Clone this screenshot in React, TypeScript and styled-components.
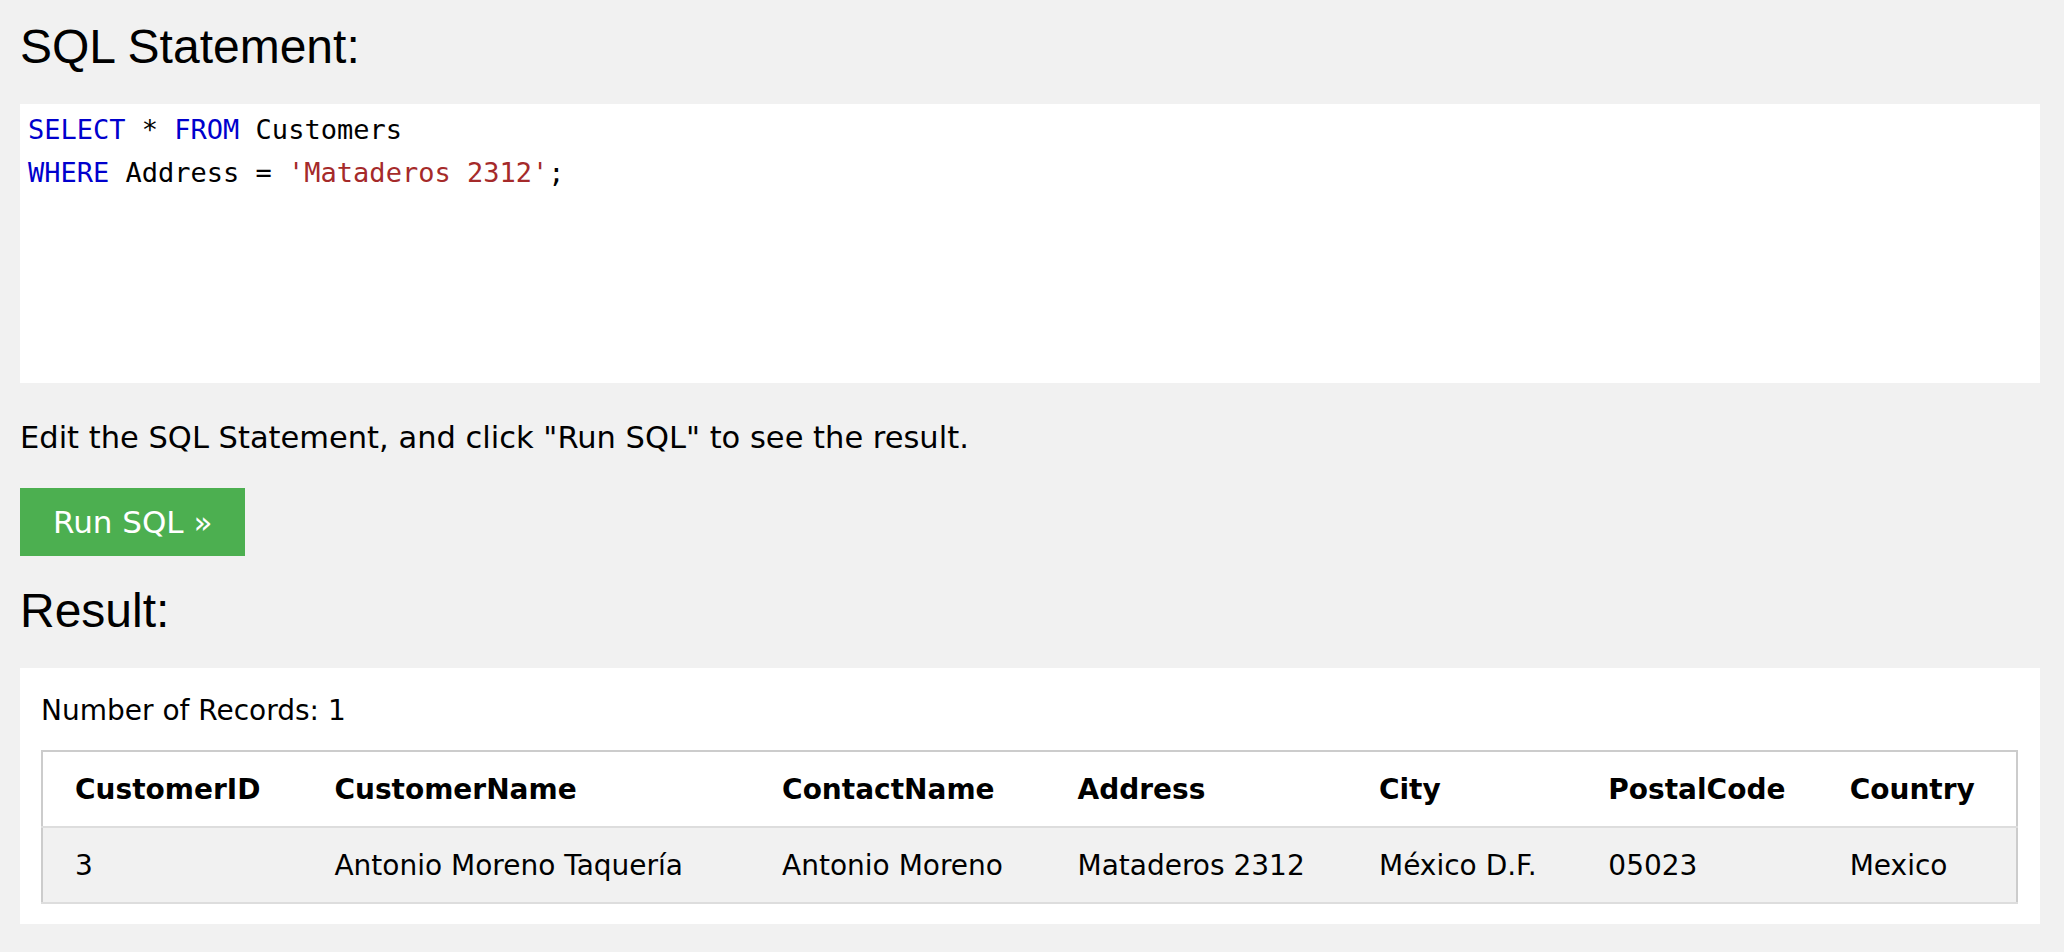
import { FC } from "react";
import styled, { createGlobalStyle } from "styled-components";

const GlobalStyle = createGlobalStyle`
  body {
    margin: 0;
    background: #f1f1f1;
    color: #000;
    font-family: "DejaVu Sans", Verdana, sans-serif;
  }
`;

interface Column {
  key: string;
  width: number;
}

const columns: Column[] = [
  { key: "CustomerID", width: 276 },
  { key: "CustomerName", width: 447 },
  { key: "ContactName", width: 295 },
  { key: "Address", width: 301 },
  { key: "City", width: 229 },
  { key: "PostalCode", width: 241 },
  { key: "Country", width: 183 },
];

const rows: Record<string, string>[] = [
  {
    CustomerID: "3",
    CustomerName: "Antonio Moreno Taquería",
    ContactName: "Antonio Moreno",
    Address: "Mataderos 2312",
    City: "México D.F.",
    PostalCode: "05023",
    Country: "Mexico",
  },
];

const App: FC = () => {
  return (
    <>
      <GlobalStyle />
      <Page>
        <Heading>SQL Statement:</Heading>
        <Editor>
          <CodeLine>
            <Keyword>SELECT</Keyword> * <Keyword>FROM</Keyword> Customers
          </CodeLine>
          <CodeLine>
            <Keyword>WHERE</Keyword> Address = <StringLit>'Mataderos 2312'</StringLit>;
          </CodeLine>
        </Editor>
        <Hint>Edit the SQL Statement, and click "Run SQL" to see the result.</Hint>
        <RunButton type="button">Run SQL »</RunButton>
        <Heading>Result:</Heading>
        <ResultPanel>
          <RecordCount>Number of Records: 1</RecordCount>
          <Table>
            <colgroup>
              {columns.map((c) => (
                <Col key={c.key} $width={c.width} />
              ))}
            </colgroup>
            <thead>
              <tr>
                {columns.map((c) => (
                  <Th key={c.key}>{c.key}</Th>
                ))}
              </tr>
            </thead>
            <tbody>
              {rows.map((r, i) => (
                <Tr key={i}>
                  {columns.map((c) => (
                    <Td key={c.key}>{r[c.key]}</Td>
                  ))}
                </Tr>
              ))}
            </tbody>
          </Table>
        </ResultPanel>
      </Page>
    </>
  );
};

const Page = styled.main`
  padding: 20px 24px 0 20px;
`;

const Heading = styled.h2`
  margin: 0 0 30px;
  font-family: "Liberation Sans", Arial, sans-serif;
  font-size: 48px;
  font-weight: normal;
  line-height: 54px;
`;

const Editor = styled.div`
  background: #fff;
  height: 279px;
  box-sizing: border-box;
  padding: 4px 8px;
  font-family: "DejaVu Sans Mono", Menlo, monospace;
  font-size: 27px;
  line-height: 43.3px;
`;

const CodeLine = styled.div`
  white-space: pre;
`;

const Keyword = styled.span`
  color: #0000cd;
`;

const StringLit = styled.span`
  color: #a52a2a;
`;

const Hint = styled.p`
  margin: 32px 0 28px;
  font-size: 30.5px;
  line-height: 45px;
`;

const RunButton = styled.button`
  display: block;
  margin: 0 0 28px;
  padding: 16px 33px;
  border: none;
  border-radius: 0;
  background: #4caf50;
  color: #fff;
  font-family: "DejaVu Sans", Verdana, sans-serif;
  font-size: 31px;
  line-height: 36px;
  cursor: pointer;
`;

const ResultPanel = styled.section`
  background: #fff;
  padding: 21px 22px 20px 21px;
`;

const RecordCount = styled.div`
  font-size: 28px;
  line-height: 42px;
  padding-top: 1px;
  margin-bottom: 18px;
`;

const Table = styled.table`
  width: 100%;
  table-layout: fixed;
  border-collapse: collapse;
  border: 2px solid #ccc;
  font-size: 28px;
  line-height: 42px;
`;

const Col = styled.col<{ $width: number }>`
  width: ${(p) => p.$width}px;
`;

const Th = styled.th`
  text-align: left;
  font-weight: bold;
  padding: 17px 16px 15px;
  border-bottom: 2px solid #ddd;
  white-space: nowrap;

  &:first-child {
    padding-left: 32px;
  }
`;

const Tr = styled.tr`
  background: #f1f1f1;
  border-bottom: 2px solid #ddd;
`;

const Td = styled.td`
  padding: 17px 16px 15px;
  white-space: nowrap;

  &:first-child {
    padding-left: 32px;
  }
`;

export default App;
